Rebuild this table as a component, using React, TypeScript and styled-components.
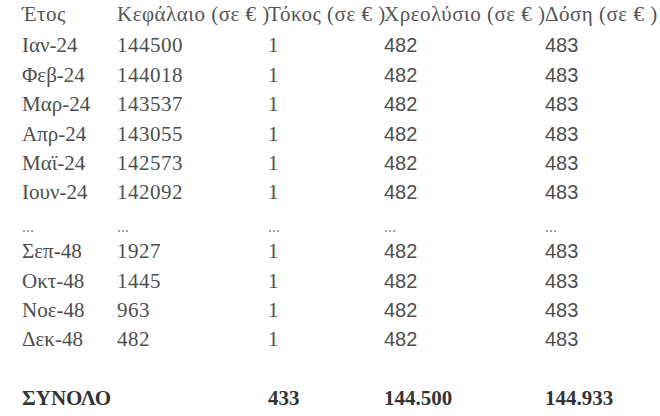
import React, { Fragment } from 'react'
import styled, { createGlobalStyle } from 'styled-components'

const GlobalStyle = createGlobalStyle`
  html, body {
    margin: 0;
    padding: 0;
    background: #ffffff;
  }
`

interface Row {
  month: string
  capital: string
  interest: string
  principal: string
  payment: string
}

const firstRows: Row[] = [
  { month: 'Ιαν-24', capital: '144500', interest: '1', principal: '482', payment: '483' },
  { month: 'Φεβ-24', capital: '144018', interest: '1', principal: '482', payment: '483' },
  { month: 'Μαρ-24', capital: '143537', interest: '1', principal: '482', payment: '483' },
  { month: 'Απρ-24', capital: '143055', interest: '1', principal: '482', payment: '483' },
  { month: 'Μαϊ-24', capital: '142573', interest: '1', principal: '482', payment: '483' },
  { month: 'Ιουν-24', capital: '142092', interest: '1', principal: '482', payment: '483' }
]

const lastRows: Row[] = [
  { month: 'Σεπ-48', capital: '1927', interest: '1', principal: '482', payment: '483' },
  { month: 'Οκτ-48', capital: '1445', interest: '1', principal: '482', payment: '483' },
  { month: 'Νοε-48', capital: '963', interest: '1', principal: '482', payment: '483' },
  { month: 'Δεκ-48', capital: '482', interest: '1', principal: '482', payment: '483' }
]

const DataRow = ({ row }: { row: Row }) => (
  <Fragment>
    <Cell>{row.month}</Cell>
    <Cell numeric>{row.capital}</Cell>
    <Cell numeric>{row.interest}</Cell>
    <Cell sans>{row.principal}</Cell>
    <Cell sans>{row.payment}</Cell>
  </Fragment>
)

const App = () => {
  return (
    <Page>
      <GlobalStyle />
      <Table>
        <Head>Έτος</Head>
        <Head>Κεφάλαιο (σε € )</Head>
        <Head>Τόκος (σε € )</Head>
        <Head>Χρεολύσιο (σε € )</Head>
        <Head>Δόση (σε € )</Head>

        {firstRows.map(r => (
          <DataRow key={r.month} row={r} />
        ))}

        {[0, 1, 2, 3, 4].map(i => (
          <Dots key={i}>...</Dots>
        ))}

        {lastRows.map(r => (
          <DataRow key={r.month} row={r} />
        ))}

        <Spacer />

        <Total>ΣΥΝΟΛΟ</Total>
        <Total />
        <Total>433</Total>
        <Total>144.500</Total>
        <Total>144.933</Total>
      </Table>
    </Page>
  )
}

const Page = styled.div`
  width: 660px;
  height: 416px;
  overflow: hidden;
  background: #ffffff;
  box-sizing: border-box;
  padding: 0 0 0 22px;
`

const Table = styled.div`
  display: grid;
  grid-template-columns: 95px 151px 116px 161px auto;
  grid-auto-rows: 29.4px;
  font-family: 'Liberation Serif', 'Times New Roman', serif;
  font-size: 21px;
  color: #4e4e4e;
`

const Head = styled.div`
  white-space: nowrap;
  line-height: 29.4px;
  color: #555555;
  margin-bottom: -2px;
  letter-spacing: 0.5px;
`

const Cell = styled.div<{ sans?: boolean; numeric?: boolean }>`
  white-space: nowrap;
  line-height: 29.4px;
  transform: translateY(2px);
  ${p => (p.numeric ? `letter-spacing: 0.5px;` : '')}
  ${p => (p.sans ? `font-family: 'Liberation Sans', Arial, sans-serif; font-size: 20px;` : '')}
`

const Dots = styled.div`
  line-height: 29.4px;
  font-size: 16px;
  color: #8a8a8a;
  transform: translateY(6px);
`

const Spacer = styled.div`
  grid-column: 1 / -1;
`

const Total = styled.div`
  white-space: nowrap;
  line-height: 29.4px;
  font-weight: bold;
  color: #333333;
  transform: translateY(2px);
`

export default App
